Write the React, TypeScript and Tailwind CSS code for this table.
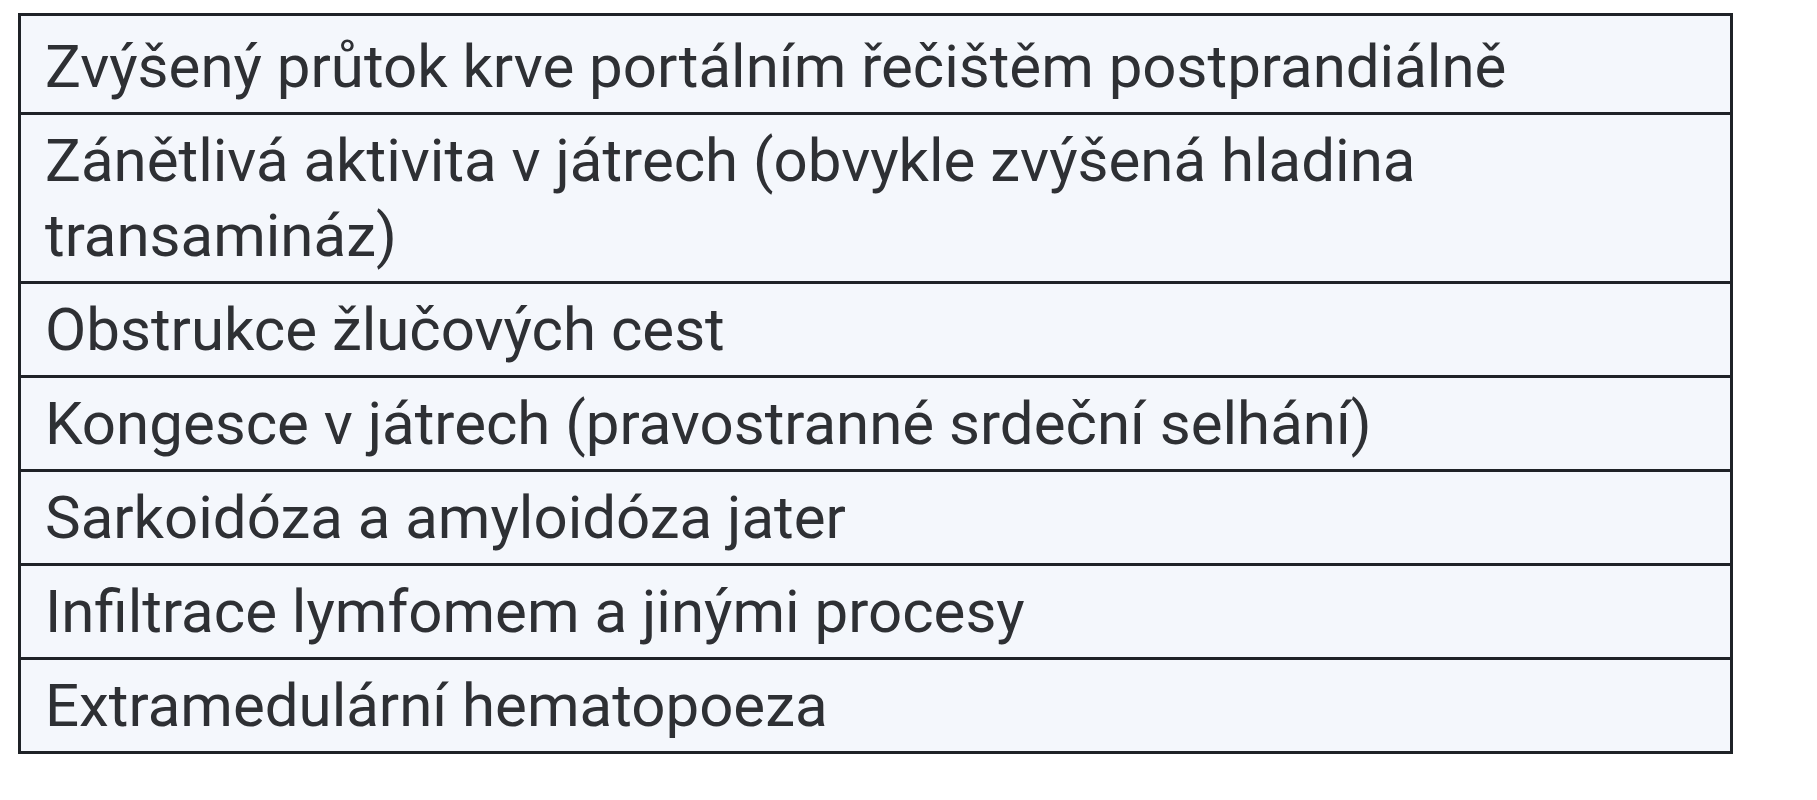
import React from 'react'

const rows: string[][] = [
  ['Zvýšený průtok krve portálním řečištěm postprandiálně'],
  ['Zánětlivá aktivita v játrech (obvykle zvýšená hladina', 'transamináz)'],
  ['Obstrukce žlučových cest'],
  ['Kongesce v játrech (pravostranné srdeční selhání)'],
  ['Sarkoidóza a amyloidóza jater'],
  ['Infiltrace lymfomem a jinými procesy'],
  ['Extramedulární hematopoeza'],
]

const App = () => {
  return (
    <div className="w-[1817px] h-[800px] bg-white pl-[18px] pt-[13px]">
      <table className="w-[1715px] border-collapse bg-[#f4f7fc] text-[#2e3034] font-['Roboto','Liberation_Sans',sans-serif] text-[60px] leading-[75px]">
        <tbody>
          {rows.map((lines, i) => (
            <tr key={i}>
              <td
                className={
                  i === 0
                    ? 'border-[3px] border-[#1f2227] pl-[24px] pr-4 pt-[13px] pb-[8px] whitespace-nowrap'
                    : 'border-[3px] border-[#1f2227] pl-[24px] pr-4 py-[8px] whitespace-nowrap'
                }
              >
                {lines.map((l, j) => (
                  <div key={j}>{l}</div>
                ))}
              </td>
            </tr>
          ))}
        </tbody>
      </table>
    </div>
  )
}

export default App
